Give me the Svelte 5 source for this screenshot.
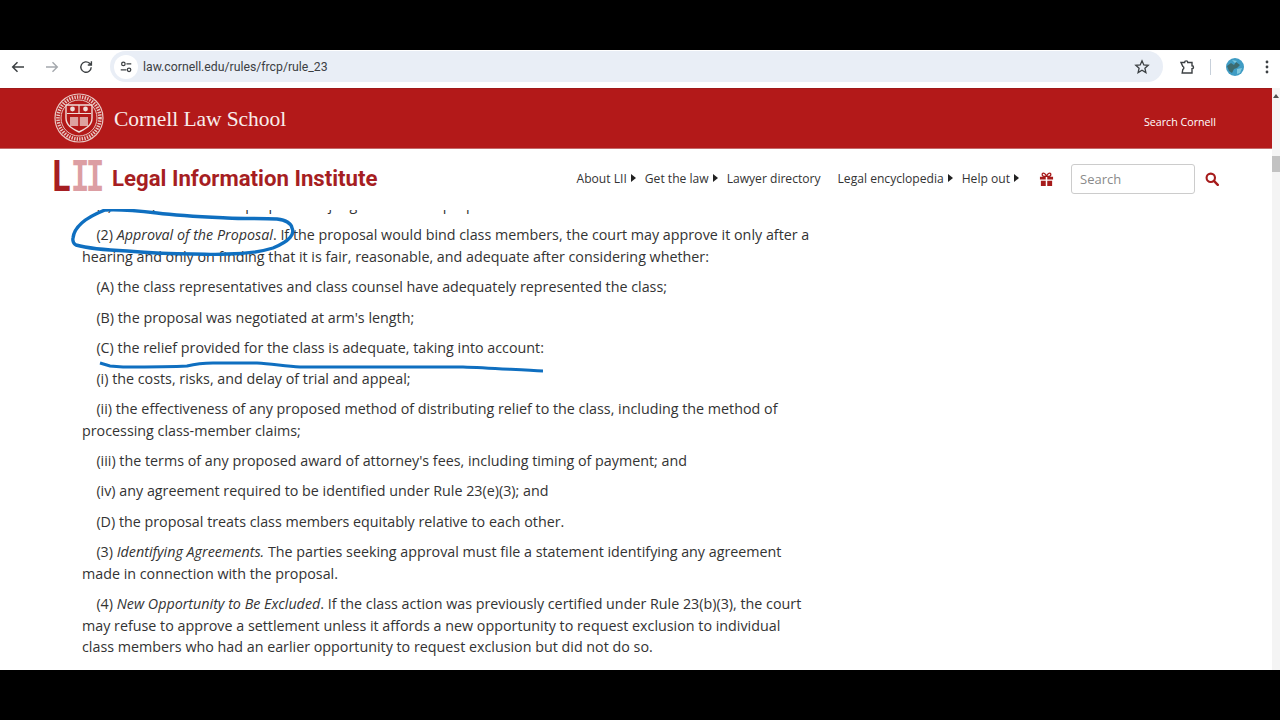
<script>
  const links = [
    { label: 'About LII', caret: true },
    { label: 'Get the law', caret: true },
    { label: 'Lawyer directory', caret: false },
    { label: 'Legal encyclopedia', caret: true },
    { label: 'Help out', caret: true }
  ];
</script>

<div class="screen">
  <div class="black top"></div>
  <header class="chrome">
    <div class="navbtns">
      <svg class="ic" viewBox="0 0 16 16"><path d="M14 8H3M7.5 3.2 2.7 8l4.8 4.8" fill="none" stroke="#3c4043" stroke-width="1.5"/></svg>
      <svg class="ic" viewBox="0 0 16 16"><path d="M2 8h11M8.5 3.2 13.3 8l-4.8 4.8" fill="none" stroke="#a4a8ad" stroke-width="1.4"/></svg>
      <svg class="ic" viewBox="0 0 16 16"><path d="M13.2 8.2A5.2 5.2 0 1 1 11.6 4.3L13.2 6M13.4 2.3V6H9.8" fill="none" stroke="#3c4043" stroke-width="1.4"/></svg>
    </div>
    <div class="omnibox">
      <span class="tune">
        <svg viewBox="0 0 16 16" width="14" height="14"><circle cx="5" cy="4.5" r="2" fill="none" stroke="#3c4043" stroke-width="1.4"/><path d="M8.5 4.5H14M2 11.2h6.5" stroke="#3c4043" stroke-width="1.4"/><circle cx="11.5" cy="11.2" r="2" fill="none" stroke="#3c4043" stroke-width="1.4"/></svg>
      </span>
      <span class="url">law.cornell.edu/rules/frcp/rule_23</span>
      <svg class="star" viewBox="0 0 16 16" width="16" height="16"><path d="M8 1.8l1.8 4.1 4.4.4-3.3 2.9 1 4.4L8 11.3l-3.9 2.3 1-4.4-3.3-2.9 4.4-.4z" fill="none" stroke="#3c4043" stroke-width="1.3"/></svg>
    </div>
    <div class="tools">
      <svg class="ext" viewBox="0 0 16 16" width="16" height="16"><path d="M2 3.5h3.6a1.6 1.6 0 0 1 3.2 0H13v3.2a1.5 1.5 0 0 1 0 3V14H3.2l.6-3.6a1.6 1.6 0 0 0 0-3L2 3.5z" fill="none" stroke="#3c4043" stroke-width="1.4"/></svg>
      <span class="sep"></span>
      <svg class="avatar" viewBox="0 0 18 18" width="18" height="18"><circle cx="9" cy="9" r="9" fill="#3f9cc4"/><path d="M1 8l4-3 3 2 2-3 4 3-3 3-3 1-2 4-3-2z" fill="#3d6b70"/><path d="M6 2l5 1-2 2zM11 11l5-1-2 5-3 1z" fill="#7fc8de"/></svg>
      <svg class="dots" viewBox="0 0 4 16" width="4" height="16"><circle cx="2" cy="3" r="1.4" fill="#3c4043"/><circle cx="2" cy="8" r="1.4" fill="#3c4043"/><circle cx="2" cy="13" r="1.4" fill="#3c4043"/></svg>
    </div>
  </header>

  <div class="viewport">
    <div class="site">
      <div class="redbar">
        <div class="brand">
          <svg class="seal" viewBox="0 0 50 50" width="50" height="50">
            <circle cx="25" cy="25" r="24" fill="none" stroke="#e9c6c2" stroke-width="1.2"/>
            <circle cx="25" cy="25" r="21" fill="none" stroke="#e9c6c2" stroke-width="3.6" stroke-dasharray="1.4 1.2"/>
            <circle cx="25" cy="25" r="18" fill="none" stroke="#e9c6c2" stroke-width="1"/>
            <path d="M12 12h26v13c0 8-7 11-13 14-6-3-13-6-13-14z" fill="none" stroke="#f0dcd8" stroke-width="1.4"/>
            <path d="M13 20.5h24M25 12v8.5" stroke="#f0dcd8" stroke-width="1.2"/>
            <path d="M16 24h8.2v9H16zM25.8 24H34v9h-8.2z" fill="#f0dcd8" opacity=".7"/>
            <circle cx="18.5" cy="16" r="2.4" fill="#f0dcd8"/><circle cx="31.5" cy="16" r="2.4" fill="#f0dcd8"/>
          </svg>
          <span class="school">Cornell Law School</span>
        </div>
        <a class="searchcornell" href="#top">Search Cornell</a>
      </div>

      <nav class="lii">
        <div class="logo">
          <span class="mark"><span class="l">L</span><span class="i">I</span><span class="i">I</span></span>
          <span class="name">Legal Information Institute</span>
        </div>
        <div class="menu">
          {#each links as l}
            <span class="item" class:wide={!l.caret}>{l.label}{#if l.caret}<i class="caret"></i>{/if}</span>
          {/each}
          <svg class="gift" viewBox="0 0 16 16" width="15" height="15"><path d="M1 5h6.2v3H1zM8.8 5H15v3H8.8zM2 9.4h5.2V15H2zM8.8 9.4H14V15H8.8z" fill="#a61b1b"/><path d="M8 4.6C6.8 1.6 5 .8 4 1.4c-1.2.8-.6 3 1 3.2zM8 4.6c1.2-3 3-3.8 4-3.2 1.2.8.6 3-1 3.2z" fill="none" stroke="#a61b1b" stroke-width="1.4"/></svg>
          <span class="searchbox">Search</span>
          <svg class="glass" viewBox="0 0 16 16" width="14" height="14"><circle cx="6.6" cy="6.6" r="4.8" fill="none" stroke="#a61b1b" stroke-width="2.4"/><path d="M10.2 10.2 14.6 14.6" stroke="#a61b1b" stroke-width="2.8" stroke-linecap="round"/></svg>
        </div>
      </nav>

      <main class="main">
        <div class="clip">
          <article class="text">
            <p>(ii) certify the class for purposes of judgment on the proposal.</p>
            <p>(2) <em>Approval of the Proposal</em>. If the proposal would bind class members, the court may approve it only after a hearing and only on finding that it is fair, reasonable, and adequate after considering whether:</p>
            <p>(A) the class representatives and class counsel have adequately represented the class;</p>
            <p>(B) the proposal was negotiated at arm's length;</p>
            <p>(C) the relief provided for the class is adequate, taking into account:</p>
            <p>(i) the costs, risks, and delay of trial and appeal;</p>
            <p>(ii) the effectiveness of any proposed method of distributing relief to the class, including the method of processing class-member claims;</p>
            <p>(iii) the terms of any proposed award of attorney's fees, including timing of payment; and</p>
            <p>(iv) any agreement required to be identified under Rule 23(e)(3); and</p>
            <p>(D) the proposal treats class members equitably relative to each other.</p>
            <p>(3) <em>Identifying Agreements.</em> The parties seeking approval must file a statement identifying any agreement made in connection with the proposal.</p>
            <p>(4) <em>New Opportunity to Be Excluded</em>. If the class action was previously certified under Rule 23(b)(3), the court may refuse to approve a settlement unless it affords a new opportunity to request exclusion to individual class members who had an earlier opportunity to request exclusion but did not do so.</p>
          </article>
        </div>
        <svg class="ink" viewBox="0 0 1272 461" width="1272" height="461">
          <path d="M105 1C120 0 140 2 157 4C180 7 205 8 227 9C245 10 262 9 277 10C285 11 291 14 292 19C295 25 290 32 273 39C260 43 245 45 227 45C215 46 205 45 193 45C170 45 150 44 127 42C105 41 90 40 76 36C72 34 73 29 73 29C74 20 82 10 105 1Z" fill="none" stroke="#0f6fc0" stroke-width="3.4"/>
          <path d="M100 154L110 157L123 158C145 158 170 158 187 157C195 155 205 154 213 154C230 154 245 154 257 154C272 155 285 157 300 158C350 158 410 158 463 158C490 159 520 161 543 162" fill="none" stroke="#0f6fc0" stroke-width="3"/>
        </svg>
      </main>
    </div>
    <div class="scrollbar">
      <svg viewBox="0 0 8 6" width="8" height="6"><path d="M4 1 7 5H1z" fill="#505050"/></svg>
      <span class="thumb"></span>
    </div>
  </div>
  <div class="black bottom"></div>
</div>

<style>
  :global(body) { margin: 0; background: #000; }
  .screen { width: 1280px; height: 720px; display: flex; flex-direction: column; overflow: hidden; font-family: "Open Sans", sans-serif; }
  .black { background: #000; flex: none; }
  .top { height: 50px; }
  .bottom { height: 50px; }

  .chrome { height: 38px; flex: none; background: #fff; display: flex; align-items: center; box-sizing: border-box; padding: 0 0 5px 10px; }
  .navbtns { display: flex; gap: 18px; width: 100px; align-items: center; }
  .ic { width: 16px; height: 16px; }
  .omnibox { width: 1053px; height: 31px; background: #e9eef6; border-radius: 16px; display: flex; align-items: center; box-sizing: border-box; padding: 0 13px 0 4px; }
  .tune { width: 24px; height: 24px; border-radius: 50%; background: #fff; display: flex; align-items: center; justify-content: center; }
  .url { margin-left: 5px; font: 12.25px Roboto, sans-serif; color: #3c4043; flex: 1; }
  .tools { display: flex; align-items: center; margin-left: 16px; }
  .sep { width: 1px; height: 16px; background: #c7d0da; margin: 0 15px 0 15px; }
  .avatar { margin-right: 21px; }

  .viewport { height: 582px; flex: none; display: flex; background: #fff; }
  .site { width: 1272px; flex: none; display: flex; flex-direction: column; }
  .scrollbar { width: 8px; flex: none; background: #f4f4f4; display: flex; flex-direction: column; align-items: center; padding-top: 5px; box-sizing: border-box; }
  .thumb { width: 8px; height: 16px; margin-top: 57px; background: #c2c2c2; }

  .redbar { height: 61px; flex: none; background: #b31919; border-top: 1px solid #9f1a1a; border-bottom: 1px solid #c46a6a; display: flex; align-items: center; justify-content: space-between; box-sizing: border-box; padding: 0 56px 0 54px; color: #fff; }
  .brand { display: flex; align-items: center; gap: 10px; margin-bottom: 2px; }
  .school { font: 21.5px/26px "Liberation Serif", serif; color: #f8ecea; letter-spacing: -0.06px; margin-top: 2px; }
  .searchcornell { color: #fff; font-size: 10.7px; text-decoration: none; margin-top: 6px; }

  .lii { height: 61px; flex: none; display: flex; align-items: center; justify-content: space-between; box-sizing: border-box; padding: 0 53px 1px 54px; background: #fff; position: relative; z-index: 1; }
  .logo { display: flex; align-items: center; gap: 9px; margin-bottom: 2px; }
  .mark { display: inline-flex; height: 30px; width: 49px; font: bold 46px/32px "Liberation Mono", monospace; }
  .l { color: #a61e22; display: inline-block; width: 18.5px; margin-left: -3px; margin-right: 3px; transform: scaleX(.74); transform-origin: left; }
  .i { color: #dc9ea3; display: inline-block; width: 15px; margin-left: -1.5px; margin-right: 1.5px; transform: scaleX(.66); transform-origin: left; }
  .name { font: bold 22.2px Roboto, sans-serif; color: #a61e22; }
  .menu { display: flex; align-items: center; font-size: 12.1px; color: #333; }
  .item { margin-right: 9px; margin-bottom: 2px; display: inline-flex; align-items: center; }
  .item.wide { margin-right: 17px; }
  .caret { display: inline-block; margin-left: 4px; border-left: 5px solid #222; border-top: 4px solid transparent; border-bottom: 4px solid transparent; }
  .gift { margin: 0 17px 0 11px; }
  .searchbox { width: 124px; height: 30px; box-sizing: border-box; border: 1px solid #ccc; border-radius: 3px; padding: 0 8px; line-height: 28px; font-size: 13px; color: #8a8a8a; margin-right: 10px; }

  .main { position: relative; height: 460px; }
  .clip { height: 460px; overflow: hidden; }
  .text { width: 732px; margin: -16px 0 0 82px; font-size: 14.3px; line-height: 21.6px; color: #333; }
  .text p { margin: 0 0 8.8px; text-indent: 14.4px; }
  .ink { position: absolute; left: 0; top: -1px; z-index: 2; pointer-events: none; }
</style>
